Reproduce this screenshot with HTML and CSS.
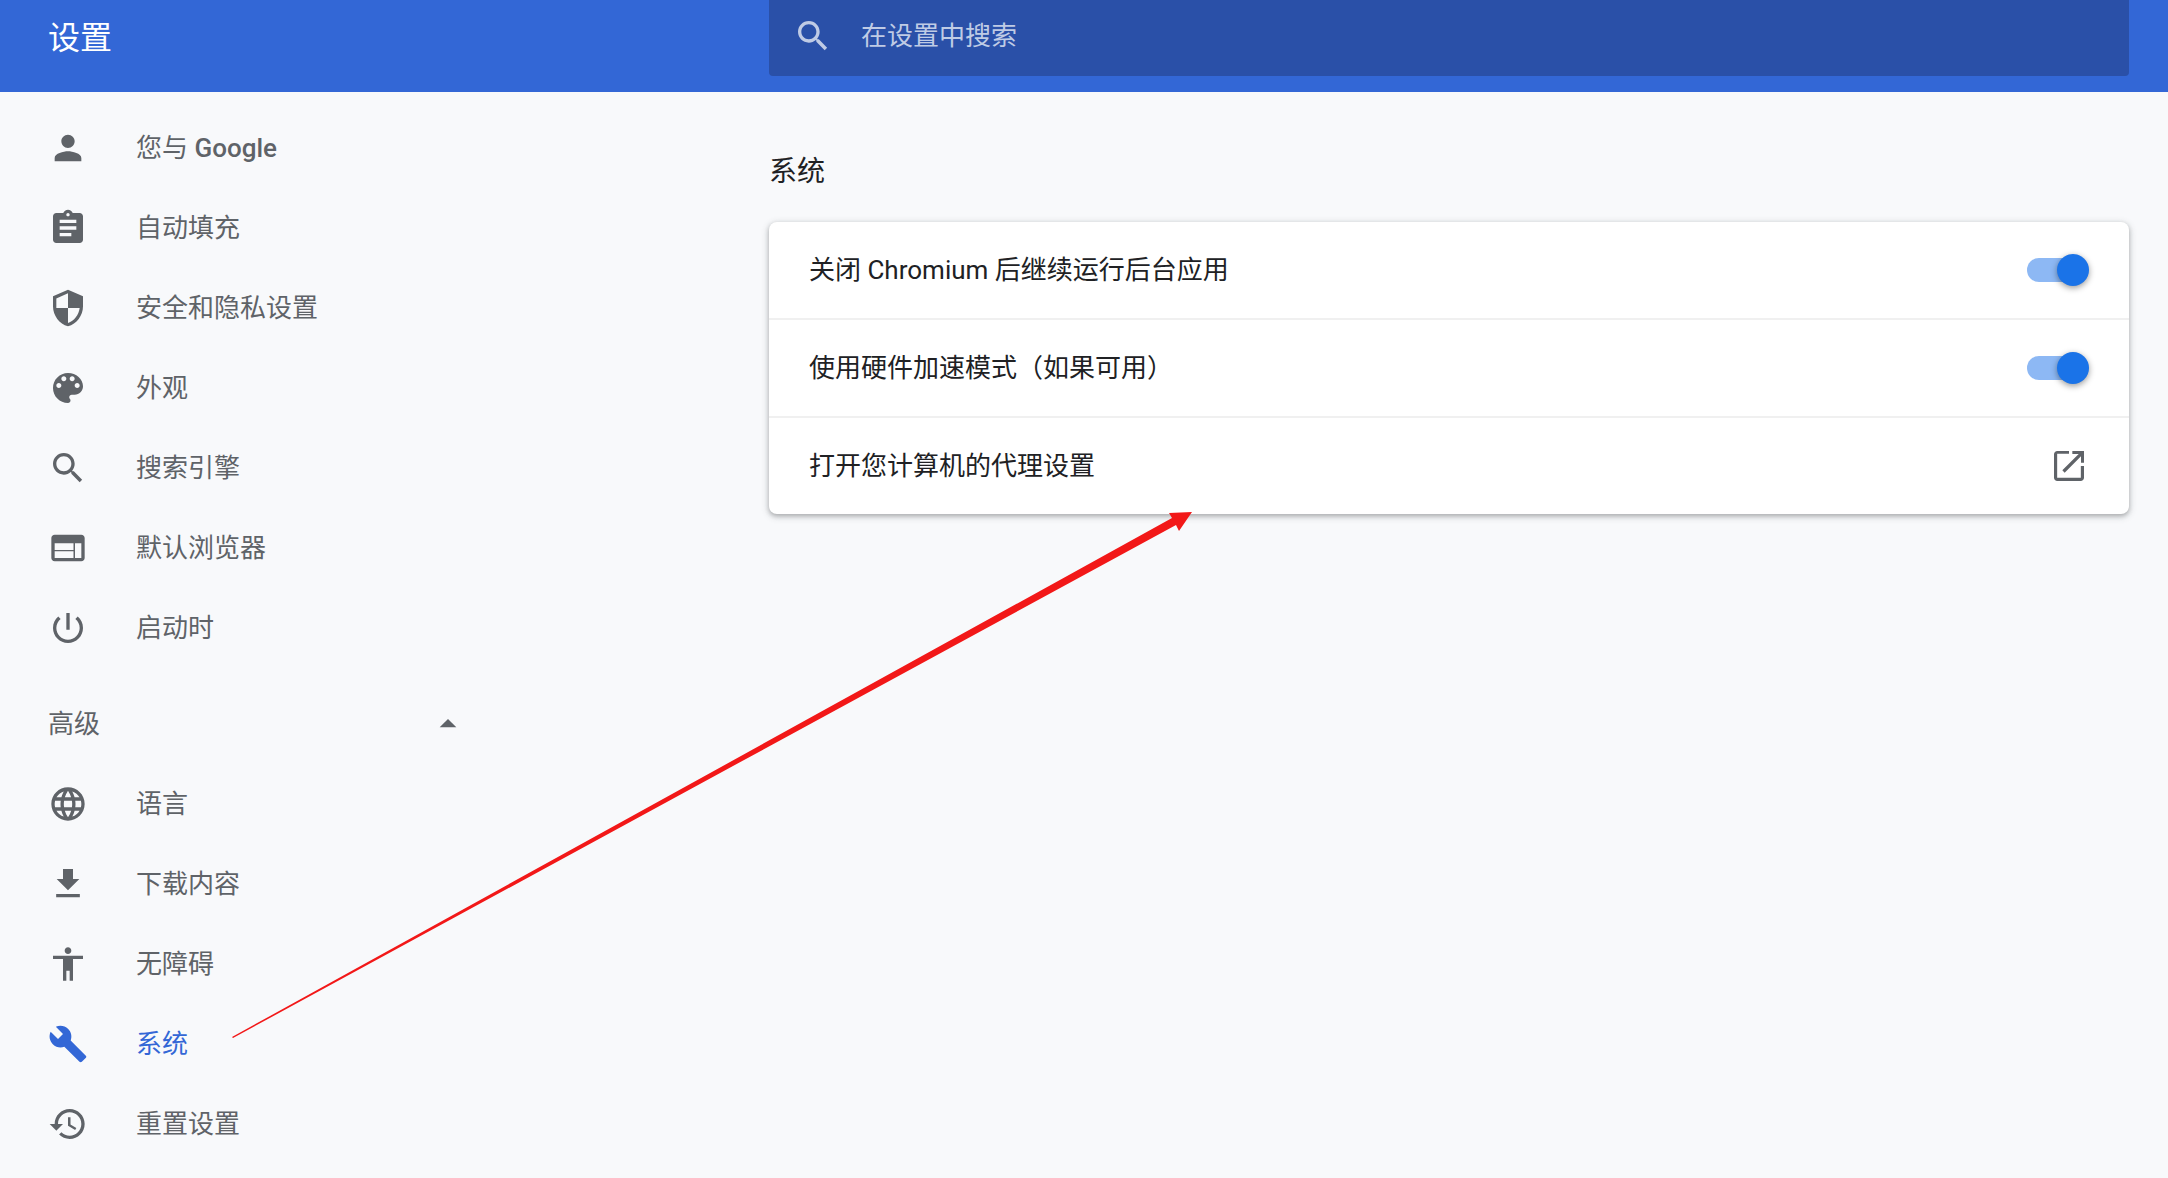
FILE: index.html
```html
<!DOCTYPE html>
<html lang="zh-CN">
<head>
<meta charset="utf-8">
<meta name="viewport" content="width=device-width, initial-scale=1">
<title>设置</title>
<link rel="stylesheet" href="styles.css">
</head>
<body>
<header class="toolbar">
  <h1 class="toolbar-title">设置</h1>
  <label class="search">
    <svg class="icon" viewBox="0 0 24 24" aria-hidden="true"><path d="M15.5 14h-.79l-.28-.27C15.41 12.59 16 11.11 16 9.5 16 5.91 13.09 3 9.5 3S3 5.91 3 9.5 5.91 16 9.5 16c1.61 0 3.09-.59 4.23-1.57l.27.28v.79l5 4.99L20.49 19l-4.99-5zm-6 0C7.01 14 5 11.99 5 9.5S7.01 5 9.5 5 14 7.01 14 9.5 11.99 14 9.5 14z"/></svg>
    <input class="search-input" type="search" placeholder="在设置中搜索" aria-label="在设置中搜索">
  </label>
</header>
<div class="layout">
  <nav class="sidebar">
    <a class="nav-item" href="#people"><svg class="icon" viewBox="0 0 24 24" aria-hidden="true"><path d="M12 12c2.21 0 4-1.79 4-4s-1.79-4-4-4-4 1.79-4 4 1.79 4 4 4zm0 2c-2.67 0-8 1.34-8 4v2h16v-2c0-2.66-5.33-4-8-4z"/></svg><span>您与 <span class="latin">Google</span></span></a>
    <a class="nav-item" href="#autofill"><svg class="icon" viewBox="0 0 24 24" aria-hidden="true"><path d="M19 3h-4.18C14.4 1.84 13.3 1 12 1c-1.3 0-2.4.84-2.82 2H5c-1.1 0-2 .9-2 2v14c0 1.1.9 2 2 2h14c1.1 0 2-.9 2-2V5c0-1.1-.9-2-2-2zm-7 0c.55 0 1 .45 1 1s-.45 1-1 1-1-.45-1-1 .45-1 1-1zm2 14H7v-2h7v2zm3-4H7v-2h10v2zm0-4H7V7h10v2z"/></svg><span>自动填充</span></a>
    <a class="nav-item" href="#privacy"><svg class="icon" viewBox="0 0 24 24" aria-hidden="true"><path d="M12 1L3 5v6c0 5.55 3.84 10.74 9 12 5.16-1.26 9-6.45 9-12V5l-9-4zm0 10.99h7c-.53 4.12-3.28 7.79-7 8.94V12H5V6.3l7-3.11v8.8z"/></svg><span>安全和隐私设置</span></a>
    <a class="nav-item" href="#appearance"><svg class="icon" viewBox="0 0 24 24" aria-hidden="true"><path d="M12 3c-4.97 0-9 4.03-9 9s4.03 9 9 9c.83 0 1.5-.67 1.5-1.5 0-.39-.15-.74-.39-1.01-.23-.26-.38-.61-.38-.99 0-.83.67-1.5 1.5-1.5H16c2.76 0 5-2.24 5-5 0-4.42-4.03-8-9-8zm-5.5 9c-.83 0-1.5-.67-1.5-1.5S5.67 9 6.5 9 8 9.67 8 10.5 7.33 12 6.5 12zm3-4C8.67 8 8 7.33 8 6.5S8.67 5 9.5 5s1.5.67 1.5 1.5S10.33 8 9.5 8zm5 0c-.83 0-1.5-.67-1.5-1.5S13.67 5 14.5 5s1.5.67 1.5 1.5S15.33 8 14.5 8zm3 4c-.83 0-1.5-.67-1.5-1.5S16.67 9 17.5 9s1.5.67 1.5 1.5-.67 1.5-1.5 1.5z"/></svg><span>外观</span></a>
    <a class="nav-item" href="#search"><svg class="icon" viewBox="0 0 24 24" aria-hidden="true"><path d="M15.5 14h-.79l-.28-.27C15.41 12.59 16 11.11 16 9.5 16 5.91 13.09 3 9.5 3S3 5.91 3 9.5 5.91 16 9.5 16c1.61 0 3.09-.59 4.23-1.57l.27.28v.79l5 4.99L20.49 19l-4.99-5zm-6 0C7.01 14 5 11.99 5 9.5S7.01 5 9.5 5 14 7.01 14 9.5 11.99 14 9.5 14z"/></svg><span>搜索引擎</span></a>
    <a class="nav-item" href="#browser"><svg class="icon" viewBox="0 0 24 24" aria-hidden="true"><path fill-rule="evenodd" d="M20 4H4c-1.1 0-1.99.9-1.99 2L2 18c0 1.1.9 2 2 2h16c1.1 0 2-.9 2-2V6c0-1.1-.9-2-2-2zM4 9.2h11.3v4H4zM4 13.9h11.3V18H4zM16.2 9.2H20V18h-3.8z"/></svg><span>默认浏览器</span></a>
    <a class="nav-item" href="#startup"><svg class="icon" viewBox="0 0 24 24" aria-hidden="true"><path d="M13 3h-2v10h2V3zm4.83 2.17l-1.42 1.42C17.99 7.86 19 9.81 19 12c0 3.87-3.13 7-7 7s-7-3.13-7-7c0-2.19 1.01-4.14 2.58-5.42L6.17 5.17C4.23 6.82 3 9.26 3 12c0 4.97 4.03 9 9 9s9-4.03 9-9c0-2.74-1.23-5.18-3.17-6.83z"/></svg><span>启动时</span></a>
    <button class="nav-toggle" type="button" aria-expanded="true"><span>高级</span><svg class="icon" viewBox="0 0 24 24" aria-hidden="true"><path d="M7 14l5-5 5 5z"/></svg></button>
    <a class="nav-item" href="#languages"><svg class="icon" viewBox="0 0 24 24" aria-hidden="true"><path d="M11.99 2C6.47 2 2 6.48 2 12s4.47 10 9.99 10C17.52 22 22 17.52 22 12S17.52 2 11.99 2zm6.93 6h-2.95c-.32-1.25-.78-2.45-1.38-3.56 1.84.63 3.37 1.91 4.33 3.56zM12 4.04c.83 1.2 1.48 2.53 1.91 3.96h-3.82c.43-1.43 1.08-2.76 1.91-3.96zM4.26 14C4.1 13.36 4 12.69 4 12s.1-1.36.26-2h3.38c-.08.66-.14 1.32-.14 2 0 .68.06 1.34.14 2H4.26zm.82 2h2.95c.32 1.25.78 2.45 1.38 3.56-1.84-.63-3.37-1.9-4.33-3.56zm2.95-8H5.08c.96-1.66 2.49-2.93 4.33-3.56C8.81 5.55 8.35 6.75 8.03 8zM12 19.96c-.83-1.2-1.48-2.53-1.91-3.96h3.82c-.43 1.43-1.08 2.76-1.91 3.96zM14.34 14H9.66c-.09-.66-.16-1.32-.16-2 0-.68.07-1.35.16-2h4.68c.09.65.16 1.32.16 2 0 .68-.07 1.34-.16 2zm.25 5.56c.6-1.11 1.06-2.31 1.38-3.56h2.95c-.96 1.65-2.49 2.93-4.33 3.56zM16.36 14c.08-.66.14-1.32.14-2 0-.68-.06-1.34-.14-2h3.38c.16.64.26 1.31.26 2s-.1 1.36-.26 2h-3.38z"/></svg><span>语言</span></a>
    <a class="nav-item" href="#downloads"><svg class="icon" viewBox="0 0 24 24" aria-hidden="true"><path d="M18.8 9H15V3H9v6H5.2L12 15.8zM4.9 18v2h14.2v-2z"/></svg><span>下载内容</span></a>
    <a class="nav-item" href="#accessibility"><svg class="icon" viewBox="0 0 24 24" aria-hidden="true"><path d="M12 2c1.1 0 2 .9 2 2s-.9 2-2 2-2-.9-2-2 .9-2 2-2zm9 7h-6v13h-2v-6h-2v6H9V9H3V7h18v2z"/></svg><span>无障碍</span></a>
    <a class="nav-item nav-item-selected" href="#system" aria-current="page"><svg class="icon" viewBox="0 0 24 24" aria-hidden="true"><path d="M22.7 19l-9.1-9.1c.9-2.3.4-5-1.5-6.9-2-2-5-2.4-7.4-1.3L9 6 6 9 1.6 4.7C.4 7.1.9 10.1 2.9 12.1c1.9 1.9 4.6 2.4 6.9 1.5l9.1 9.1c.4.4 1 .4 1.4 0l2.3-2.3c.5-.4.5-1.1.1-1.4z"/></svg><span>系统</span></a>
    <a class="nav-item" href="#reset"><svg class="icon" viewBox="0 0 24 24" aria-hidden="true"><path d="M13 3c-4.97 0-9 4.03-9 9H1l3.89 3.89.07.14L9 12H6c0-3.87 3.13-7 7-7s7 3.13 7 7-3.13 7-7 7c-1.93 0-3.68-.79-4.94-2.06l-1.42 1.42C8.27 19.99 10.51 21 13 21c4.97 0 9-4.03 9-9s-4.03-9-9-9zm-1 5v5l4.28 2.54.72-1.21-3.5-2.08V8H12z"/></svg><span>重置设置</span></a>
  </nav>
  <main class="content">
    <h2 class="section-title">系统</h2>
    <div class="card">
      <label class="row"><span>关闭 Chromium 后继续运行后台应用</span><input class="switch" type="checkbox" role="switch" checked></label>
      <label class="row"><span>使用硬件加速模式（如果可用）</span><input class="switch" type="checkbox" role="switch" checked></label>
      <a class="row" href="#proxy"><span>打开您计算机的代理设置</span><svg class="icon" viewBox="0 0 24 24" aria-hidden="true"><path d="M12 3v1.700H4.900v14.400h14.200V12H21v7c0 1.100-.9 2-2 2H5c-1.100 0-2-.9-2-2V5c0-1.100.9-2 2-2zM14 3v1.800h3.800L8 14.600l1.400 1.400L19.200 6.200V10H21V3z"/></svg></a>
    </div>
  </main>
</div>
<svg class="annotation" viewBox="0 0 960 528" aria-hidden="true"><path d="M0 525L940 6 937 1 960 0 947 19 944 13 1 526z"/></svg>
</body>
</html>
```
FILE: styles.css
```css
* {
  box-sizing: border-box;
}

body {
  position: relative;
  min-height: 100vh;
  margin: 0;
  background: #f8f9fb;
  color: #202124;
  font: 400 26px/40px Roboto, "Noto Sans CJK SC", sans-serif;
}

.toolbar,
.layout {
  display: grid;
  grid-template-columns: 1fr minmax(0, 1360px);
  padding-right: 39px;
}

.toolbar {
  padding-bottom: 16px;
  background: #3367d6;
  color: #fff;
}

.toolbar-title {
  align-self: center;
  margin: 0;
  padding-left: 48px;
  font-size: 32px;
  font-weight: 400;
}

.search {
  display: flex;
  align-items: center;
  gap: 28px;
  height: 76px;
  padding: 0 24px 4px;
  border-radius: 0 0 4px 4px;
  background: #2a50a8;
  color: #bfcbe5;
}

.search-input {
  flex: 1;
  min-width: 0;
  height: 40px;
  padding: 0;
  border: 0;
  outline: 0;
  background: none;
  color: #fff;
  font: inherit;
}

.search-input::placeholder {
  color: #bfcbe5;
  opacity: 1;
}

.icon {
  flex: none;
  width: 40px;
  height: 40px;
  fill: currentColor;
}

.sidebar {
  width: 532px;
  padding-top: 16px;
  color: #5f6368;
}

.nav-item,
.nav-toggle {
  display: flex;
  align-items: center;
  height: 80px;
  padding-left: 48px;
  color: inherit;
  text-decoration: none;
}

.nav-item {
  gap: 48px;
}

.nav-item-selected {
  color: #3367d6;
}

.nav-toggle {
  justify-content: space-between;
  width: 100%;
  margin-top: 16px;
  padding-right: 64px;
  border: 0;
  background: none;
  font: inherit;
}

.latin {
  font-weight: 500;
}

.section-title {
  margin: 0;
  padding: 60px 0 30px;
  font-size: 28px;
  font-weight: 400;
}

.card {
  border-radius: 8px;
  background: #fff;
  box-shadow: 0 2px 4px rgba(60, 64, 67, 0.3), 0 2px 6px 2px rgba(60, 64, 67, 0.15);
}

.row {
  display: flex;
  align-items: center;
  justify-content: space-between;
  height: 96px;
  padding: 0 40px;
  color: inherit;
  text-decoration: none;
}

.row + .row {
  height: 98px;
  border-top: 2px solid #f0f0f0;
}

.row .icon {
  color: #5f6368;
}

.switch {
  display: flex;
  align-items: center;
  width: 56px;
  height: 24px;
  margin: 0 6px 0 0;
  border-radius: 12px;
  appearance: none;
  background: #8db8f4;
}

.switch::before {
  content: "";
  flex: none;
  width: 32px;
  height: 32px;
  border-radius: 50%;
  background: #1a73e8;
  box-shadow: 0 2px 6px rgba(0, 0, 0, 0.4);
}

.switch:checked::before {
  margin-left: 30px;
}

.annotation {
  position: absolute;
  top: 512px;
  left: 232px;
  width: 960px;
  height: 528px;
  fill: #f21818;
  pointer-events: none;
}
```
